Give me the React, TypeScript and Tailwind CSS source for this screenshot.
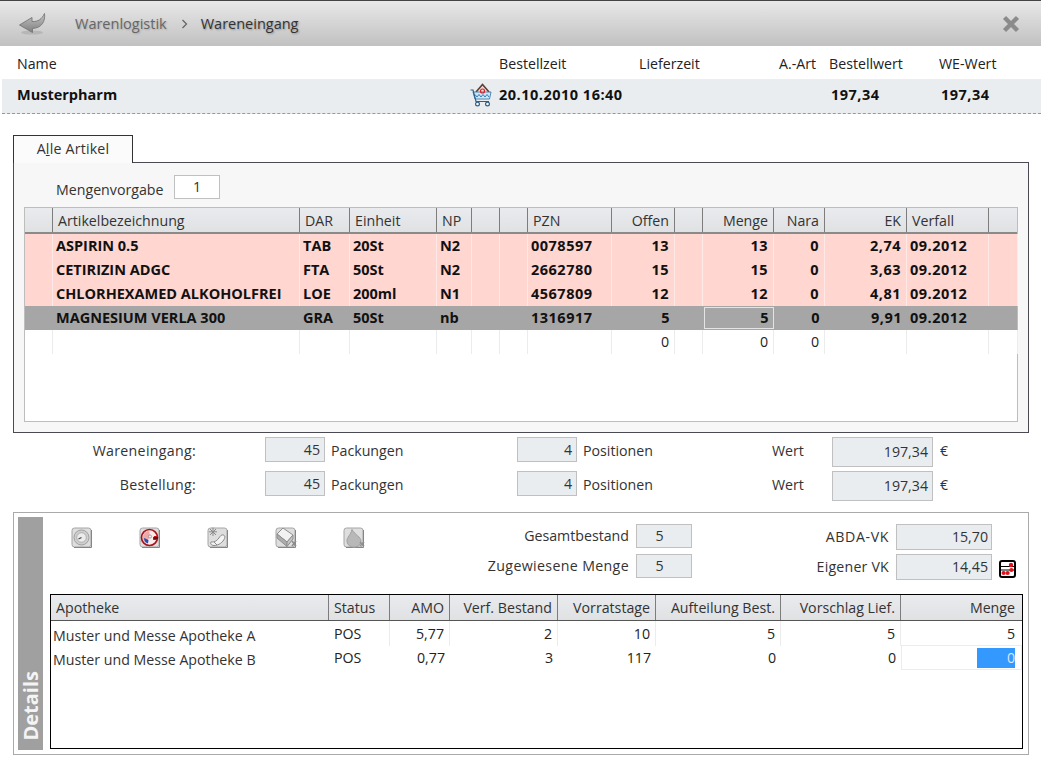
import React from "react"

const font = "font-['Open_Sans','Noto_Sans',sans-serif] text-[14.2px]"

const ARTICLE_COLS = "grid-cols-[28px_247px_50px_87px_35px_28px_28px_84px_63px_28px_71px_51px_82px_82px_29px]"
const STOCK_COLS = "grid-cols-[278px_61px_60px_108px_98px_125px_120px_121px]"

const headCell = "flex items-center h-full border-r border-[#7d7d7d] px-[5px] pt-[1px] text-[#333] last:border-r-0"
const gridHead = "bg-gradient-to-b from-[#e9ebee] to-[#dfe1e3]"

type Align = "l" | "r"
const articleHead: [string, Align][] = [
  ["", "l"], ["Artikelbezeichnung", "l"], ["DAR", "l"], ["Einheit", "l"], ["NP", "l"], ["", "l"], ["", "l"],
  ["PZN", "l"], ["Offen", "r"], ["", "l"], ["Menge", "r"], ["Nara", "r"], ["EK", "r"], ["Verfall", "l"], ["", "l"],
]

const articles = [
  ["ASPIRIN 0.5", "TAB", "20St", "N2", "0078597", "13", "13", "0", "2,74", "09.2012"],
  ["CETIRIZIN ADGC", "FTA", "50St", "N2", "2662780", "15", "15", "0", "3,63", "09.2012"],
  ["CHLORHEXAMED ALKOHOLFREI", "LOE", "200ml", "N1", "4567809", "12", "12", "0", "4,81", "09.2012"],
  ["MAGNESIUM VERLA 300", "GRA", "50St", "nb", "1316917", "5", "5", "0", "9,91", "09.2012"],
  ["", "", "", "", "", "0", "0", "0", "", ""],
]

const stockHead: [string, Align][] = [
  ["Apotheke", "l"], ["Status", "l"], ["AMO", "r"], ["Verf. Bestand", "r"], ["Vorratstage", "r"],
  ["Aufteilung Best.", "r"], ["Vorschlag Lief.", "r"], ["Menge", "r"],
]

const stock = [
  ["Muster und Messe Apotheke A", "POS", "5,77", "2", "10", "5", "5", "5"],
  ["Muster und Messe Apotheke B", "POS", "0,77", "3", "117", "0", "0", "0"],
]

function BackIcon() {
  return (
    <svg width="27" height="22" viewBox="0 0 27 22" aria-hidden>
      <defs>
        <linearGradient id="back" x1="0" y1="0" x2="0" y2="1">
          <stop offset="0" stopColor="#c6c6c6" />
          <stop offset="1" stopColor="#7e7e7e" />
        </linearGradient>
      </defs>
      <ellipse cx="13" cy="19.5" rx="11" ry="2" fill="#a0a0a0" opacity="0.5" />
      <path d="M0.5 12 L13 4.5 L13 8.5 C19 9 23 6 25.5 0.5 C26.5 8 23 15 13.5 15.5 L13.5 19.5 Z" fill="url(#back)" stroke="#777" strokeWidth="0.9" />
    </svg>
  )
}

function CloseIcon() {
  return (
    <svg width="18" height="18" viewBox="0 0 18 18" aria-hidden>
      <path d="M2.5 2.5 L15.5 15.5 M15.5 2.5 L2.5 15.5" stroke="#8b8b8b" strokeWidth="4.4" />
    </svg>
  )
}

function CartIcon() {
  return (
    <svg width="22" height="24" viewBox="0 0 22 24" aria-hidden>
      <path d="M6 9 L12.5 1.5 L19 9" fill="#e9dcd8" stroke="#5a4038" strokeWidth="1.6" />
      <path d="M3 9 H21 L19.5 16 H5 Z" fill="#cfe4f5" stroke="#2e6f9e" strokeWidth="0.8" />
      <path d="M5 11.5 L7 14 L9 11.5 L11 14 L13 11.5 L15 14 L17 11.5 L19 14" fill="none" stroke="#2f7fbd" strokeWidth="1" />
      <circle cx="12.5" cy="8" r="2" fill="none" stroke="#d8222a" strokeWidth="1.2" />
      <path d="M0.5 7 H3 L6 18.5 H19" fill="none" stroke="#2e5f86" strokeWidth="1.2" />
      <circle cx="7.5" cy="21" r="1.9" fill="#fff" stroke="#2e5f86" strokeWidth="1.2" />
      <circle cx="17.5" cy="21" r="1.9" fill="#fff" stroke="#2e5f86" strokeWidth="1.2" />
    </svg>
  )
}

function CalcIcon() {
  return (
    <svg width="17" height="18" viewBox="0 0 17 18" aria-hidden>
      <rect x="1" y="1" width="15" height="16" rx="2" fill="#fff" stroke="#000" strokeWidth="2" />
      <path d="M1 6.5 H16 M1 10 H16" stroke="#000" strokeWidth="1" />
      <circle cx="12" cy="5" r="2.2" fill="#e0121c" />
      <circle cx="4.6" cy="13" r="2.1" fill="#e0121c" />
      <circle cx="8.6" cy="13" r="2.1" fill="#e0121c" />
      <circle cx="12.4" cy="10" r="2.1" fill="#e0121c" />
    </svg>
  )
}

function ToolFrame({ children }: { children: React.ReactNode }) {
  return (
    <svg width="22" height="22" viewBox="0 0 22 22" aria-hidden>
      <rect x="1" y="1" width="19" height="19" rx="2.5" fill="#dedede" stroke="#a4a4a4" />
      <path d="M20.5 3 V20.5 H3" fill="none" stroke="#858585" />
      {children}
    </svg>
  )
}

const toolIcons = [
  <ToolFrame key="gauge">
    <circle cx="10.5" cy="10.5" r="7.5" fill="#cfcfcf" stroke="#a0a0a0" />
    <circle cx="10.5" cy="10.5" r="4.8" fill="#ececec" stroke="#adadad" />
    <path d="M10.5 10.5 L7.5 12" stroke="#444" strokeWidth="1.2" />
  </ToolFrame>,
  <ToolFrame key="temp">
    <circle cx="10.5" cy="10.5" r="8" fill="#fbeaea" stroke="#a8141a" strokeWidth="1.7" />
    <path d="M10.5 4 A6.5 6.5 0 0 0 7 16 L10.5 10.5 Z" fill="#efa9a9" />
    <path d="M5 11 A6 6 0 0 0 9 16.5 L9.5 13 Z" fill="#1f4fb0" />
    <path d="M15 9 H19 V13 H14 Z" fill="#c8141c" />
    <path d="M14 11 H19" stroke="#111" strokeWidth="1.2" />
    <circle cx="11" cy="9.5" r="1.6" fill="#eee" stroke="#777" strokeWidth="0.6" />
  </ToolFrame>,
  <ToolFrame key="cold">
    <path d="M6 0.5 V9 M2 4.8 H10 M3 2 L9 8 M9 2 L3 8" stroke="#8a8a8a" strokeWidth="1" />
    <path d="M4 15 C8 15 10 14 13 9.5 C15 6.5 19 8 17.5 11.5 C16 15 12 18.5 7 18.5 C4 18.5 3 16 4 15 Z" fill="#f4f4f4" stroke="#8a8a8a" />
    <path d="M7 15 L10 18" stroke="#8a8a8a" />
  </ToolFrame>,
  <ToolFrame key="pack">
    <path d="M2 7 L8 1 L18 8 L12 15 Z" fill="#f2f2f2" stroke="#8e8e8e" />
    <path d="M2 7 V11 L12 19.5 V15 Z" fill="#adadad" stroke="#8e8e8e" />
    <path d="M12 15 L18 8 V12 L12 19.5 Z" fill="#c4c4c4" stroke="#8e8e8e" />
    <path d="M17 14 L21 19 M21 14 L17 19" stroke="#8e8e8e" strokeWidth="1.6" />
  </ToolFrame>,
  <ToolFrame key="drop">
    <path d="M9 2.5 C12 8 18 10 18 14 A6.5 5.5 0 0 1 4 14.5 C3.5 10 8 8 9 2.5 Z" fill="#b8b8b8" stroke="#a0a0a0" />
    <path d="M17 15 L21 19 M21 15 L17 19" stroke="#8e8e8e" strokeWidth="1.6" />
  </ToolFrame>,
]

function ReadBox({ value, className }: { value: string; className: string }) {
  return (
    <div className={`flex items-center border border-[#c0c0c0] bg-[#e9edf0] text-[#333] ${className}`}>{value}</div>
  )
}

function Totals({ label, packs, positions, wert }: { label: string; packs: string; positions: string; wert: string }) {
  return (
    <div className="flex items-start h-[30px]">
      <div className="w-[183px] text-right text-[#333] leading-[28px] tracking-[0.3px]">{label}</div>
      <ReadBox value={packs} className="ml-[69px] w-[60px] h-[25px] justify-end pr-[4px]" />
      <div className="ml-[6px] w-[186px] text-[#333] leading-[28px]">Packungen</div>
      <ReadBox value={positions} className="w-[60px] h-[25px] justify-end pr-[4px]" />
      <div className="ml-[6px] w-[189px] text-[#333] leading-[28px]">Positionen</div>
      <div className="w-[60px] text-[#333] leading-[28px]">Wert</div>
      <ReadBox value={wert} className="w-[101px] h-[30px] justify-end pr-[4px]" />
      <div className="ml-[7px] text-[#333] leading-[28px]">€</div>
    </div>
  )
}

export default function App() {
  return (
    <div className={`w-[1041px] h-[768px] bg-white overflow-hidden text-[#222] ${font}`}>
      {/* Title bar */}
      <div className="flex items-center h-[46px] pl-[19px] pr-[21px] border-t border-[#444] bg-gradient-to-b from-[#e8e8e8] to-[#c1c1c1] text-[14.5px]">
        <BackIcon />
        <span className="ml-[29px] text-[#666] [text-shadow:1px_1px_2px_rgba(0,0,0,0.2)]">Warenlogistik</span>
        <svg className="ml-[14px]" width="7" height="10" viewBox="0 0 7 10" aria-hidden>
          <path d="M1.5 1 L5.5 5 L1.5 9" fill="none" stroke="#666" strokeWidth="1.3" />
        </svg>
        <span className="ml-[13px] text-[#333] [text-shadow:1px_1px_2px_rgba(0,0,0,0.3)]">Wareneingang</span>
        <div className="ml-auto">
          <CloseIcon />
        </div>
      </div>

      {/* Order summary */}
      <div className="grid grid-cols-[482px_140px_140px_50px_110px_auto] items-center h-[33px] pt-[2px] pl-[17px]">
        <div>Name</div>
        <div>Bestellzeit</div>
        <div>Lieferzeit</div>
        <div>A.-Art</div>
        <div>Bestellwert</div>
        <div>WE-Wert</div>
      </div>
      <div className="grid grid-cols-[482px_140px_140px_50px_110px_auto] items-center h-[35px] pb-[2px] ml-[2px] pl-[15px] bg-[#e9edf0] border-b border-dashed border-[#999] font-bold text-[14.5px] text-[#111]">
        <div className="flex items-center justify-between pr-[7px]">
          <span>Musterpharm</span>
          <CartIcon />
        </div>
        <div className="whitespace-nowrap tracking-[0.5px]">20.10.2010 16:40</div>
        <div />
        <div />
        <div className="pl-[2px] tracking-[0.5px]">197,34</div>
        <div className="pl-[2px] tracking-[0.5px]">197,34</div>
      </div>

      {/* Tab */}
      <div className="relative z-10 ml-[13px] mt-[21px] -mb-px flex items-center justify-center w-[120px] h-[28px] pb-[2px] border border-b-0 border-[#333] bg-[#fbfbfb] text-[#333] tracking-[0.2px]">
        <span>
          A<span className="underline">l</span>le Artikel
        </span>
      </div>
      <div className="ml-[13px] w-[1016px] h-[271px] border border-[#4a4a55] bg-[#f7f7f7]">
        <div className="flex items-start h-[32px] pt-[12px] pl-[42px]">
          <span className="w-[112px] mt-[4px] text-[#333]">Mengenvorgabe</span>
          <div className="ml-[6px] flex justify-center items-center w-[46px] h-[24px] border border-[#c0c0c0] bg-white text-[#333]">1</div>
        </div>
        <div className="mt-[12px] ml-[10px] w-[994px] h-[215px] border border-[#bdbdbd] bg-white">
          <div className={`grid ${ARTICLE_COLS} h-[26px] border-b-2 border-[#8a8a8a] ${gridHead}`}>
            {articleHead.map(([t, a], i) => (
              <div key={i} className={`${headCell} ${a === "r" ? "justify-end" : ""}`}>{t}</div>
            ))}
          </div>
          {articles.map((row, r) => {
            const selected = r === 3
            const empty = r === 4
            const cells = [
              "", row[0], row[1], row[2], row[3], "", "", row[4], row[5], "", row[6], row[7], row[8], row[9], "",
            ]
            const right = [8, 10, 11, 12]
            const numeric = [7, 8, 10, 11, 12, 13]
            return (
              <div
                key={r}
                className={`grid ${ARTICLE_COLS} h-[24px] ${selected ? "bg-[#a6a6a6]" : empty ? "bg-white" : "bg-[#ffd6d0]"} ${empty ? "font-normal" : "font-bold text-[14.5px] text-[#111]"}`}
              >
                {cells.map((c, i) => (
                  <div
                    key={i}
                    className={`relative flex items-center whitespace-nowrap px-[3px] ${right.includes(i) ? "justify-end pr-[5px]" : ""} ${numeric.includes(i) && !empty ? "tracking-[0.5px]" : ""} ${selected ? "" : empty ? "border-r border-[#ececec]" : "border-r border-[#ffe9e6]"}`}
                  >
                    {c}
                    {selected && i === 10 && (
                      <div className="absolute left-[1px] right-0 top-[1px] bottom-[1px] border border-[#e4e4e4]" />
                    )}
                  </div>
                ))}
              </div>
            )
          })}
        </div>
      </div>

      {/* Totals */}
      <div className="mt-[4px] ml-[13px] h-[75px] flex flex-col gap-[4px]">
        <Totals label="Wareneingang:" packs="45" positions="4" wert="197,34" />
        <Totals label="Bestellung:" packs="45" positions="4" wert="197,34" />
      </div>

      {/* Details */}
      <div className="ml-[13px] w-[1016px] h-[243px] flex p-[4px] border border-[#aaa]">
        <div className="flex items-end justify-center w-[25px] h-[233px] pb-[9px] bg-[#a0a0a0]">
          <span className="[writing-mode:vertical-rl] rotate-180 text-[20px] font-bold leading-none text-[#f4f4f4]">Details</span>
        </div>
        <div className="flex flex-col">
          <div className="flex h-[77px]">
            <div className="flex items-start gap-[46px] w-[357px] pl-[28px] pt-[10px]">{toolIcons}</div>
            <div className="flex flex-col items-end gap-[6px] w-[292px] pt-[7px]">
              <div className="flex items-center gap-[7px]">
                <span className="text-[#333]">Gesamtbestand</span>
                <ReadBox value="5" className="w-[56px] h-[24px] justify-center pr-[9px]" />
              </div>
              <div className="flex items-center gap-[7px]">
                <span className="text-[#333] tracking-[0.35px]">Zugewiesene Menge</span>
                <ReadBox value="5" className="w-[56px] h-[24px] justify-center pr-[9px]" />
              </div>
            </div>
            <div className="flex flex-col items-end gap-[4px] w-[300px] pt-[7px]">
              <div className="flex items-center gap-[7px]">
                <span className="text-[#333] tracking-[0.6px]">ABDA-VK</span>
                <ReadBox value="15,70" className="w-[96px] h-[26px] justify-end pr-[3px]" />
              </div>
              <div className="flex items-center gap-[7px]">
                <span className="text-[#333] tracking-[0.2px]">Eigener VK</span>
                <ReadBox value="14,45" className="w-[96px] h-[26px] justify-end pr-[3px]" />
              </div>
            </div>
            <div className="pt-[43px] pl-[7px]">
              <CalcIcon />
            </div>
          </div>
          <div className="ml-[7px] w-[973px] h-[155px] border border-black bg-white">
            <div className={`grid ${STOCK_COLS} h-[26px] border-b border-[#555] ${gridHead}`}>
              {stockHead.map(([t, a]) => (
                <div key={t} className={`${headCell} whitespace-nowrap last:pr-[7px] ${a === "r" ? "justify-end" : ""}`}>{t}</div>
              ))}
            </div>
            {stock.map((row, r) => (
              <div key={r} className={`grid ${STOCK_COLS} h-[24px]`}>
                {row.map((c, i) => {
                  if (i === 0) {
                    return <div key={i} className="pl-[2px] pt-[4px] whitespace-nowrap text-[#333]">{c}</div>
                  }
                  if (i === 7 && r === 1) {
                    return (
                      <div key={i} className="flex justify-end items-center pr-[6px] border border-[#ececec]">
                        <span className="w-[38px] h-[20px] bg-[#3399ff] text-right text-[#d8e8ff] leading-[20px]">{c}</span>
                      </div>
                    )
                  }
                  return (
                    <div
                      key={i}
                      className={`flex items-center px-[5px] ${i === 1 ? "" : "justify-end"} ${i === 7 ? "pr-[7px]" : ""} ${r === 0 && i < 7 ? "border-r border-[#ececec]" : ""}`}
                    >
                      {c}
                    </div>
                  )
                })}
              </div>
            ))}
          </div>
        </div>
      </div>
    </div>
  )
}
